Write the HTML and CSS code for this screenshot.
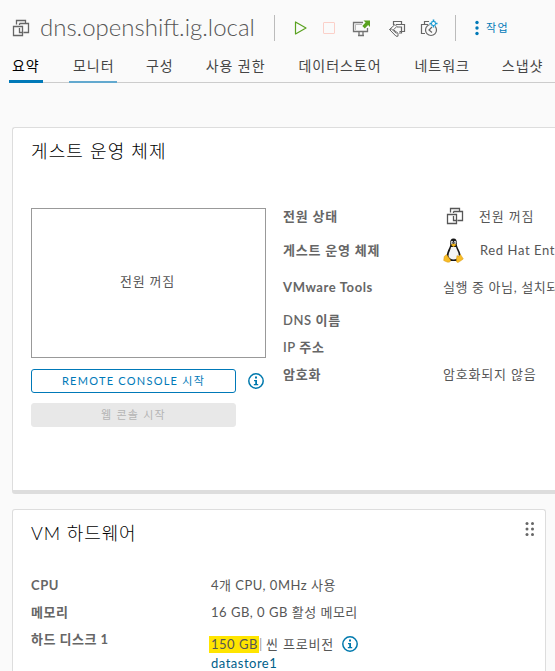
FILE: index.html
```html
<!DOCTYPE html>
<html lang="ko">
<head>
<meta charset="utf-8">
<title>dns.openshift.ig.local</title>
<link rel="stylesheet" href="styles.css">
</head>
<body>
<svg class="defs" width="0" height="0">
  <symbol id="vm" viewBox="0 0 18 18"><path d="M4.500 5.500v-4h9V4M7.500 4.500h9v9h-5M7.500 4.500V6M1.500 7.500h9v9h-9zM7.500 9v4.500h3" fill="none" stroke="currentColor" stroke-width="1.300"/></symbol>
  <symbol id="info" viewBox="0 0 16 16"><circle cx="8" cy="8" r="7.200" fill="none" stroke="currentColor" stroke-width="1.500"/><path d="M7 3.500h2v2H7zM6 7h3v4h1.200v1.200H5.800V11h1.400V8.200H6z" fill="currentColor"/></symbol>
</svg>
<header class="header">
  <svg class="title-icon"><use href="#vm"/></svg>
  <h1 class="title">dns.openshift.ig.local</h1>
  <div class="toolbar">
    <svg width="18" height="18" viewBox="0 0 18 18"><path d="M4.500 3v12L15 9z" fill="none" stroke="#5aa220" stroke-width="1.200" stroke-linejoin="round"/></svg>
    <svg class="stop" width="18" height="18" viewBox="0 0 18 18"><rect x="3.500" y="3.500" width="11" height="11" rx=".5" fill="none" stroke="#fbd0c9"/></svg>
    <svg class="launch-icon" width="18" height="18" viewBox="0 0 18 18"><path d="M10 3.500H.5v9h14V9M5 16.500h6M6 13v3M10 13v3" fill="none" stroke="#737373" stroke-width="1.300"/><path d="M2.500 11V5.500H9" fill="none" stroke="#bbb"/><path d="M10.500 1.500H17V8l-1.900-1.900-3.300 3.300-2.500-2.500 3.300-3.300z" fill="#5aa220"/></svg>
    <svg class="edit" width="18" height="18" viewBox="0 0 18 18"><path d="M5.500 6V2.500h8V5M8 5.500h8.500v7h-5M9 8h4.500v6H11" fill="none" stroke="#666" stroke-width="1.200"/><path d="M1.500 10.500l5.500-5 1.800 2-3.300 3.300 4.500 3.400v3H8zM1.500 10.500l2-.5 5 4.500" fill="none" stroke="#666"/></svg>
    <svg width="18" height="18" viewBox="0 0 18 18"><path d="M4.500 5V2.500H9M4.500 5.500h-3v9H5M4 5.500h4" fill="none" stroke="#666" stroke-width="1.200"/><circle cx="11" cy="11" r="5.500" fill="#fafafa" stroke="#666" stroke-width="1.200"/><path d="M12 8l-3 3 3 2.500" fill="none" stroke="#666" stroke-width="1.200"/><path d="M13.500 0v8.500M9.500 4.300h8" stroke="#fafafa" stroke-width="3"/><path d="M13.500.5v2.500M13.500 6v2.500M9.500 4.500H12M15 4.500h2.500M11.500 2.500l1 1M14.500 5.500l1 1M15.500 2.500l-1 1M12.500 5.500l-1 1" stroke="#189ad2" stroke-width="1.600"/></svg>
  </div>
  <div class="actions">
    <svg width="4" height="16" viewBox="0 0 4 16"><g fill="#0079b8"><circle cx="2" cy="2.500" r="1.700"/><circle cx="2" cy="8" r="1.700"/><circle cx="2" cy="13.500" r="1.700"/></g></svg>
    <span>작업</span>
  </div>
</header>
<nav class="tabs">
  <a class="tab active">요약</a><a class="tab hover">모니터</a><a class="tab t3">구성</a><a class="tab t4">사용 권한</a><a class="tab t5">데이터스토어</a><a class="tab t6">네트워크</a><a class="tab t7">스냅샷</a>
</nav>
<main>
  <section class="card guest">
    <h2>게스트 운영 체제</h2>
    <div class="guest-body">
      <div class="console">
        <div class="screen">전원 꺼짐</div>
        <div class="launch"><button class="btn">REMOTE CONSOLE 시작</button><svg class="info"><use href="#info"/></svg></div>
        <button class="btn disabled" disabled>웹 콘솔 시작</button>
      </div>
      <dl class="facts">
        <dt>전원 상태</dt><dd><svg class="power"><use href="#vm"/></svg><span>전원 꺼짐</span></dd>
        <dt>게스트 운영 체제</dt><dd>
          <svg class="tux" width="21" height="25" viewBox="0 0 21 25"><path d="M10.500.5C7.500.5 7 3 7.300 6.500 7 10 3.500 13 3.800 19l3 4h8l3-4c.2-5-3.700-9-4-12.500C14 3 13.500.5 10.500.5z" fill="#161616"/><path d="M8 9h5c.5 3 3 5 2.800 9-.3 4-9.300 5-10.300 0C5.500 14 7.800 12 8 9z" fill="#f4f4f4"/><ellipse cx="9" cy="4.500" rx="1.200" ry="1.700" fill="#ddd"/><ellipse cx="12" cy="4.500" rx="1.200" ry="1.700" fill="#ddd"/><circle cx="9.300" cy="4.800" r=".6"/><circle cx="11.800" cy="4.800" r=".6"/><path d="M7.800 6.800l2.700-1.300 3 1.300-3 2.200z" fill="#f4b61a"/><path d="M3.500 16.500l4 5.500c.4 2-1.500 2.500-3.500 2L.7 22.500l.5-4zM17.500 16.500l2.800 4.500-4.800 3.300c-2 .5-2.500-1-2-3.300l.5-3.500 1.500 1z" fill="#f8bd26" stroke="#d79512" stroke-width=".5"/></svg>
          <span class="os">Red Hat Ent</span></dd>
        <dt class="latin">VMware Tools</dt><dd class="tools">실행 중 아님, 설치되</dd>
        <dt class="plain">DNS 이름</dt><dd></dd>
        <dt class="plain">IP 주소</dt><dd></dd>
        <dt class="enc">암호화</dt><dd>암호화되지 않음</dd>
      </dl>
    </div>
  </section>
  <section class="card hardware">
    <div class="card-head"><h2>VM 하드웨어</h2>
      <svg width="10" height="16" viewBox="0 0 10 16"><g fill="#666"><circle cx="2" cy="2.500" r="1.500"/><circle cx="7.500" cy="2.500" r="1.500"/><circle cx="2" cy="8" r="1.500"/><circle cx="7.500" cy="8" r="1.500"/><circle cx="2" cy="13.500" r="1.500"/><circle cx="7.500" cy="13.500" r="1.500"/></g></svg>
    </div>
    <dl class="specs">
      <dt class="latin">CPU</dt><dd>4개 CPU, 0MHz 사용</dd>
      <dt class="latin">메모리</dt><dd>16 GB, 0 GB 활성 메모리</dd>
      <dt>하드 디스크 1</dt><dd class="disk"><div class="disk-line"><mark>150 GB</mark><span class="bar">|</span><span class="thin">씬 프로비전</span><svg class="info"><use href="#info"/></svg></div><a>datastore1</a></dd>
    </dl>
  </section>
</main>
</body>
</html>
```

FILE: styles.css
```css
* { box-sizing: border-box; }
body { margin: 0; width: 555px; height: 671px; overflow: hidden; background: #fafafa; color: #565656; font: 13px/20px Lato, "Noto Sans CJK KR", sans-serif; letter-spacing: .5px; white-space: nowrap; }
h1, h2, dl, dd { margin: 0; }
h1, h2 { font-weight: 300; }
svg { flex: none; overflow: visible; }
.defs { display: block; position: absolute; }
.header { display: flex; align-items: center; height: 50px; padding: 6px 0 0 12px; }
.title-icon { width: 18px; height: 18px; margin-right: 10px; color: #666; }
.title { width: 235px; height: 26px; line-height: 24px; font-size: 24px; letter-spacing: 0; border-right: 1px solid #bbb; }
.toolbar { display: flex; gap: 14px; width: 181px; height: 26px; align-items: center; padding-left: 16px; border-right: 1px solid #bbb; }
.stop { margin-left: -3px; }
.launch-icon { margin-left: 1px; }
.edit { margin-left: 3px; }
.actions { display: flex; align-items: center; gap: 7px; margin-left: 19px; color: #0079b8; font-size: 11px; letter-spacing: 1.3px; }
.tabs { display: flex; height: 33px; margin-left: 9px; border-bottom: 1px solid #ccc; font-size: 14px; letter-spacing: .95px; color: #454545; }
.tab { height: 33px; padding: 6px 3px 0; }
.active { width: 34px; margin-right: 26px; color: #000; border-bottom: 3px solid #0079b8; }
.hover { width: 48px; padding-left: 4px; border-bottom: 2px solid #62a9cf; }
.t3 { margin-left: 26px; }
.t4 { margin-left: 26px; }
.t5 { margin-left: 27px; }
.t6 { margin-left: 27px; }
.t7 { margin-left: 26px; }
.card { background: #fff; border: 1px solid #ddd; border-radius: 3px; }
.card h2 { color: #000; font-size: 18px; line-height: 24px; letter-spacing: .9px; }
.guest { height: 367px; margin: 44px 0 0 12px; padding: 11px 0 11px 18px; border-width: 1px 0 4px 1px; border-radius: 3px 0 0 3px; }
.guest h2 { letter-spacing: 1.1px; }
.guest-body { display: flex; margin-top: 45px; gap: 17px; }
.console { flex: none; width: 235px; }
.screen { display: grid; place-items: center; height: 150px; padding: 0 2px 4px 0; border: 1px solid #999; letter-spacing: .8px; }
.launch { display: flex; align-items: center; justify-content: space-between; width: 233px; margin: 11px 0 10px; }
.info { width: 16px; height: 16px; color: #0079ad; }
.btn { display: block; width: 205px; height: 24px; padding: 0; border: 1px solid #0079b8; border-radius: 3px; background: #fff; color: #0079b8; font: 11px/20px Lato, "Noto Sans CJK KR", sans-serif; letter-spacing: 1.25px; }
.disabled { border-color: #e8e8e8; background: #e8e8e8; color: #b4b4b4; }
.facts { display: grid; grid-template-columns: 160px 1fr; grid-template-rows: 34px 37px 33px 27px 27px 27px; flex: 1; min-width: 0; margin-top: -2px; letter-spacing: .8px; }
dt { font-weight: 700; color: #666; }
.latin { letter-spacing: .6px; }
.facts .plain { font-weight: 600; letter-spacing: .6px; }
.facts dd { display: flex; align-items: flex-start; min-width: 0; }
.power { width: 18px; height: 18px; margin: 1px 15px 0 3px; }
.tux { margin-top: -2px; }
.os { margin-left: 16px; letter-spacing: .6px; }
.tools { letter-spacing: .6px; }
.hardware { width: 534px; height: 180px; margin-top: 15px; margin-left: 12px; padding: 11px 10px 0 18px; border-bottom: 0; }
.card-head { display: flex; justify-content: space-between; }
.specs { display: grid; grid-template-columns: 180px 1fr; grid-template-rows: 27px 27px 60px; margin-top: 30px; }
.disk { padding-top: 4px; }
.disk-line { display: flex; align-items: center; height: 22px; }
mark { width: 50px; height: 17px; margin-left: -2px; padding-left: 2px; line-height: 16px; background: #ffe500; color: inherit; }
.bar { width: 7px; color: #999; }
.thin { letter-spacing: .8px; }
.disk .info { margin-left: 8px; }
.disk a { display: block; line-height: 16px; color: #00608a; }
```
